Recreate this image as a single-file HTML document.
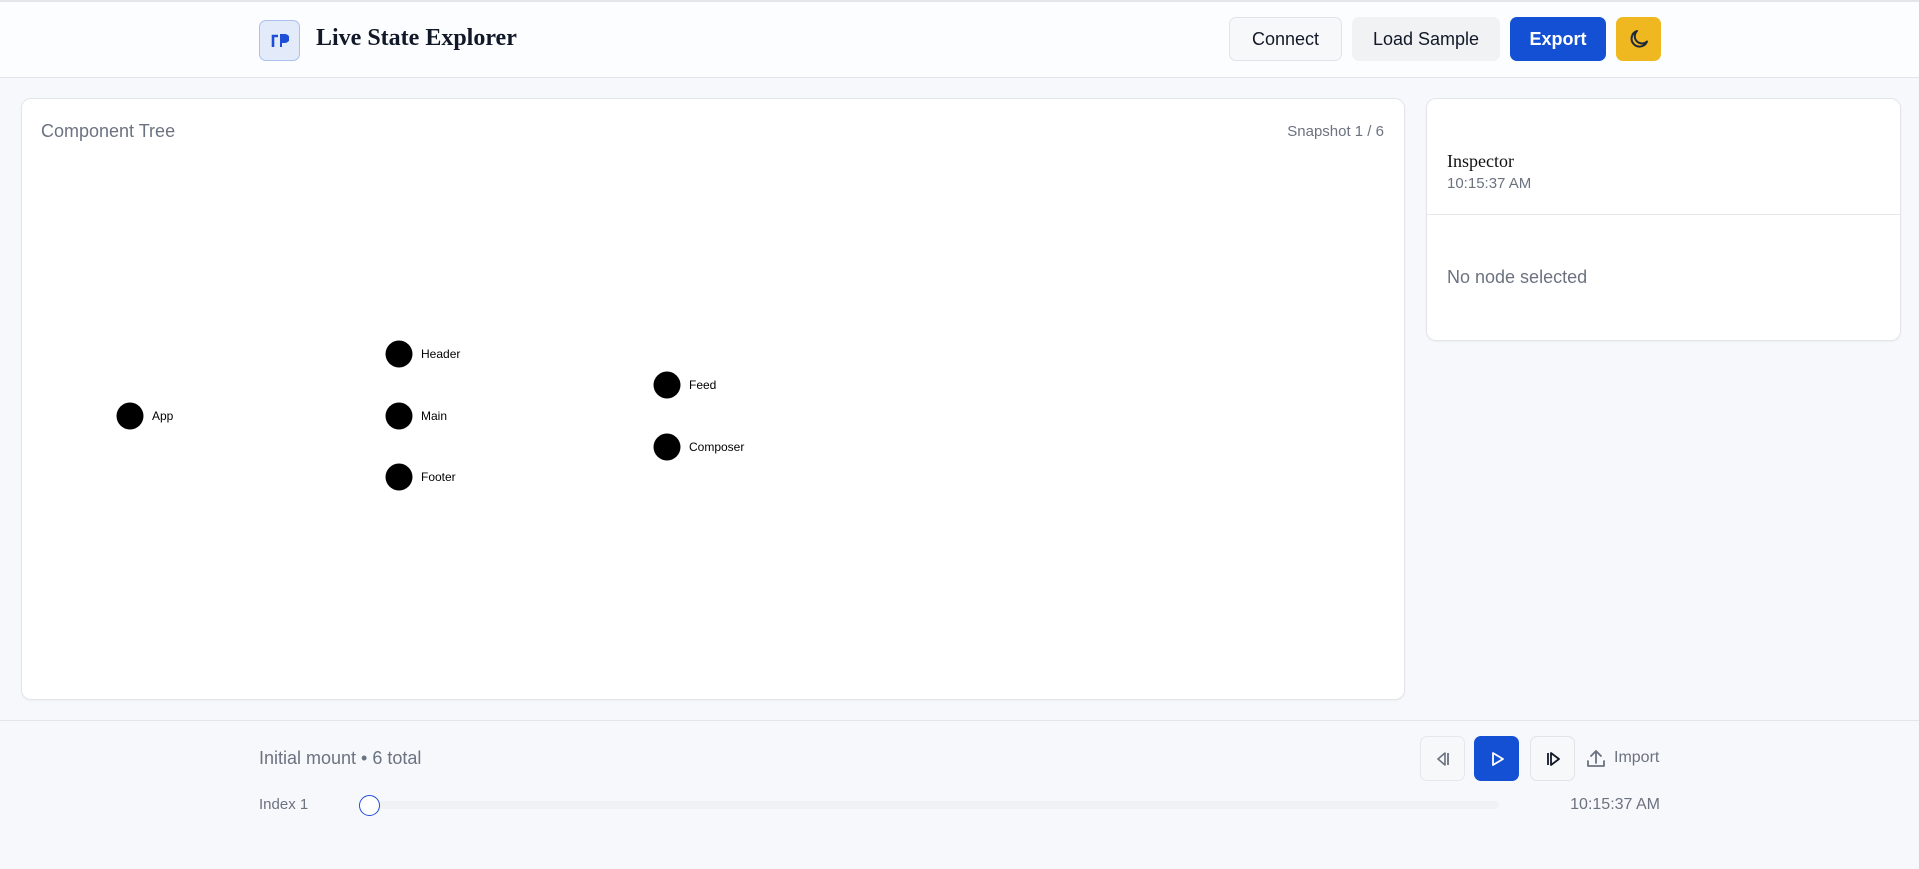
<!DOCTYPE html>
<html><head><meta charset="utf-8"><style>
*{box-sizing:border-box;margin:0;padding:0}
body{width:1919px;height:869px;background:#f7f8fb;font-family:"Liberation Sans",sans-serif;position:relative;overflow:hidden;color:#111827}
.abs{position:absolute}
.hdr{left:0;top:0;width:1919px;height:78px;background:#fcfdfe;border-top:2px solid #e3e5e8;border-bottom:1px solid #e3e5e8}
.btn{position:absolute;top:17px;height:44px;border-radius:7px;font-size:18px;display:flex;align-items:center;justify-content:center}
.card{background:#fff;border:1px solid #e3e5e8;border-radius:10px;box-shadow:0 1px 2px rgba(0,0,0,.04)}
.lbl{position:absolute;font-size:12px;color:#000;transform:translateY(-50%)}
.dot{position:absolute;width:27px;height:27px;border-radius:50%;background:#000;transform:translate(-50%,-50%)}
.sb{position:absolute;top:736px;width:45px;height:45px;border-radius:7px;display:flex;align-items:center;justify-content:center}
</style></head><body>
<div class="abs hdr"></div>
<div class="abs" style="left:259px;top:20px;width:41px;height:41px;border-radius:7px;background:#e3ebfb;border:1px solid #a9c0f0;display:flex;align-items:center;justify-content:center">
<svg width="18" height="16" viewBox="0 0 18 16"><path d="M2 14V3h5" stroke="#1d4ed8" stroke-width="2.6" fill="none"/><path d="M10 14V2h4a3 3 0 0 1 0 7h-4" fill="#1d4ed8" stroke="#1d4ed8" stroke-width="2"/></svg></div>
<div class="abs" style="left:316px;top:25px;font-family:'Liberation Serif',serif;font-weight:bold;font-size:24px;color:#111827">Live State Explorer</div>
<div class="btn" style="left:1229px;width:113px;background:#f7f8fa;border:1px solid #e1e3e7">Connect</div>
<div class="btn" style="left:1352px;width:148px;background:#f1f2f4">Load Sample</div>
<div class="btn" style="left:1510px;width:96px;background:#1450d4;color:#fff;font-weight:bold">Export</div>
<div class="btn" style="left:1616px;width:45px;background:#efb820"><svg width="24" height="24" viewBox="0 0 24 24"><path d="M20 14.5A8 8 0 1 1 10 4a6.5 6.5 0 0 0 10 10.5z" fill="none" stroke="#1f2937" stroke-width="2" stroke-linejoin="round"/></svg></div>

<div class="abs card" style="left:21px;top:98px;width:1384px;height:602px"></div>
<div class="abs" style="left:41px;top:121px;font-size:18px;color:#6b7280">Component Tree</div>
<div class="abs" style="left:1234px;width:150px;text-align:right;top:123px;font-size:15px;color:#6b7280">Snapshot 1 / 6</div>
<div class="dot" style="left:130px;top:416px"></div><div class="lbl" style="left:152px;top:416px">App</div>
<div class="dot" style="left:399px;top:354px"></div><div class="lbl" style="left:421px;top:354px">Header</div>
<div class="dot" style="left:399px;top:416px"></div><div class="lbl" style="left:421px;top:416px">Main</div>
<div class="dot" style="left:399px;top:477px"></div><div class="lbl" style="left:421px;top:477px">Footer</div>
<div class="dot" style="left:667px;top:385px"></div><div class="lbl" style="left:689px;top:385px">Feed</div>
<div class="dot" style="left:667px;top:447px"></div><div class="lbl" style="left:689px;top:447px">Composer</div>

<div class="abs card" style="left:1426px;top:98px;width:475px;height:243px"></div>
<div class="abs" style="left:1426px;top:214px;width:475px;height:1px;background:#e5e7eb"></div>
<div class="abs" style="left:1447px;top:151px;font-family:'Liberation Serif',serif;font-size:18px;color:#111">Inspector</div>
<div class="abs" style="left:1447px;top:175px;font-size:15px;color:#6b7280">10:15:37 AM</div>
<div class="abs" style="left:1447px;top:267px;font-size:18px;color:#6b7280">No node selected</div>

<div class="abs" style="left:0;top:720px;width:1919px;height:1px;background:#e3e5e8"></div>
<div class="abs" style="left:259px;top:748px;font-size:18px;color:#6b7280">Initial mount • 6 total</div>
<div class="sb" style="left:1420px;background:#f7f8fa;border:1px solid #e5e7eb"><svg width="20" height="20" viewBox="0 0 20 20"><path d="M12 4L5 10l7 6z" fill="none" stroke="#6b7280" stroke-width="1.6" stroke-linejoin="round"/><path d="M15 4v12" stroke="#6b7280" stroke-width="1.8"/></svg></div>
<div class="sb" style="left:1474px;background:#1450d4"><svg width="20" height="20" viewBox="0 0 20 20"><path d="M6 4l10 6-10 6z" fill="none" stroke="#fff" stroke-width="1.8" stroke-linejoin="round"/></svg></div>
<div class="sb" style="left:1530px;background:#f7f8fa;border:1px solid #e1e3e7"><svg width="20" height="20" viewBox="0 0 20 20"><path d="M5 4v12" stroke="#111827" stroke-width="1.8"/><path d="M8 4l8 6-8 6z" fill="none" stroke="#111827" stroke-width="1.8" stroke-linejoin="round"/></svg></div>
<svg class="abs" style="left:1585px;top:748px" width="22" height="22" viewBox="0 0 22 22"><path d="M3 13v5h16v-5M11 15V3M6 8l5-5 5 5" fill="none" stroke="#6b7280" stroke-width="1.8" stroke-linecap="round" stroke-linejoin="round"/></svg>
<div class="abs" style="left:1614px;top:749px;font-size:16px;color:#6b7280">Import</div>
<div class="abs" style="left:259px;top:796px;font-size:15px;color:#6b7280">Index 1</div>
<div class="abs" style="left:367px;top:801px;width:1132px;height:8px;border-radius:4px;background:#f0f1f3"></div>
<div class="abs" style="left:359px;top:795px;width:21px;height:21px;border-radius:50%;background:#fff;border:1.5px solid #1d4ed8"></div>
<div class="abs" style="left:1530px;width:130px;text-align:right;top:796px;font-size:16px;color:#6b7280">10:15:37 AM</div>
</body></html>
